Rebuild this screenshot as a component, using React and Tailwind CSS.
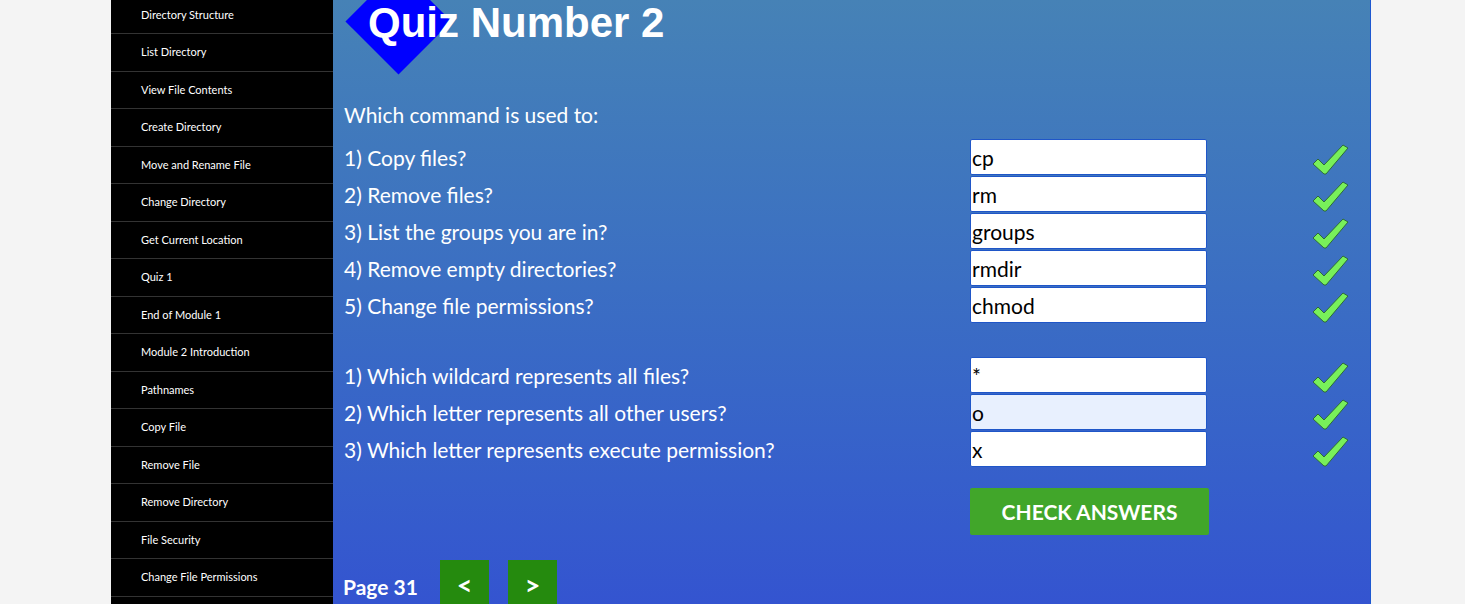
const menu = [
  'Directory Structure',
  'List Directory',
  'View File Contents',
  'Create Directory',
  'Move and Rename File',
  'Change Directory',
  'Get Current Location',
  'Quiz 1',
  'End of Module 1',
  'Module 2 Introduction',
  'Pathnames',
  'Copy File',
  'Remove File',
  'Remove Directory',
  'File Security',
  'Change File Permissions',
  'Quiz 2',
]

const commands = [
  ['1) Copy files?', 'cp'],
  ['2) Remove files?', 'rm'],
  ['3) List the groups you are in?', 'groups'],
  ['4) Remove empty directories?', 'rmdir'],
  ['5) Change file permissions?', 'chmod'],
]

const letters = [
  ['1) Which wildcard represents all files?', '*'],
  ['2) Which letter represents all other users?', 'o', true],
  ['3) Which letter represents execute permission?', 'x'],
]

function Tick() {
  return (
    <svg width="38" height="33" viewBox="0 0 38 33" className="mt-[4px]">
      <polygon
        points="1,21 6,16 12,22 31,2 36,5 14,31 12,31"
        fill="#78f05a"
        stroke="#2d6b3a"
        strokeWidth="1"
        strokeLinejoin="round"
      />
    </svg>
  )
}

function Row({ q, a, filled }) {
  return (
    <div className="flex items-center h-[36px]">
      <div className="w-[626px] text-[21px] text-white leading-none">{q}</div>
      <input
        readOnly
        value={a}
        className={`w-[237px] h-[36px] border border-[#1f56c8] rounded-[2px] px-[1px] text-[21px] text-black outline-none ${filled ? 'bg-[#e8f0fe]' : 'bg-white'}`}
      />
      <div className="ml-[105px] flex items-center">
        <Tick />
      </div>
    </div>
  )
}

export default function App() {
  return (
    <div className="h-[604px] overflow-hidden bg-[#f4f4f4] font-['Lato','Liberation_Sans',sans-serif]">
      <div className="flex ml-[111px] w-[1260px] h-[604px]">
        {/* Sidebar */}
        <div className="w-[222px] bg-black overflow-hidden">
          <ul className="mt-[-3.5px]">
            {menu.map((m) => (
              <li
                key={m}
                className="h-[37.5px] flex items-center pl-[30px] border-b border-[#333] text-[11px] text-white"
              >
                {m}
              </li>
            ))}
          </ul>
        </div>

        {/* Main */}
        <div className="relative flex-1 overflow-hidden bg-gradient-to-b from-[#4682b6] to-[#3454d0] border-r border-[#1d58d0] pl-[11px]">
          <div className="absolute left-[27.5px] top-[-16.5px] w-[75px] h-[75px] bg-[#0000ff] rotate-45" />
          <h1 className="relative ml-[24px] font-['Liberation_Sans',Arial,sans-serif] font-bold text-[42px] leading-[46px] text-white">
            Quiz Number 2
          </h1>

          <p className="mt-[57px] text-[21px] text-white leading-[24px]">Which command is used to:</p>

          <div className="mt-[12px] flex flex-col gap-[1px]">
            {commands.map(([q, a]) => (
              <Row key={q} q={q} a={a} />
            ))}
          </div>

          <div className="mt-[34px] flex flex-col gap-[1px]">
            {letters.map(([q, a, f]) => (
              <Row key={q} q={q} a={a} filled={f} />
            ))}
          </div>

          <button className="mt-[21px] ml-[626px] w-[239px] h-[47px] bg-[#41a62a] rounded-[2px] text-white font-bold text-[21px]">
            CHECK ANSWERS
          </button>

          <div className="mt-[25px] flex items-start">
            <span className="mt-[16px] ml-[-1px] w-[97px] text-white font-bold text-[21px] leading-[22px]">Page 31</span>
            <button className="w-[49px] h-[50px] bg-[#258a0e] text-white font-bold text-[27px]">&lt;</button>
            <button className="ml-[19px] w-[49px] h-[50px] bg-[#258a0e] text-white font-bold text-[27px]">&gt;</button>
          </div>
        </div>
      </div>
    </div>
  )
}
